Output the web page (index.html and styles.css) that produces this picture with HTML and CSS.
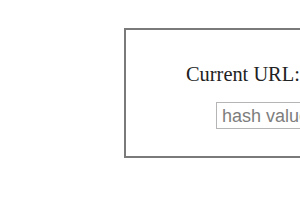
FILE: index.html
```html
<!DOCTYPE html>
<html>
<head>
<meta charset="utf-8">
<link rel="stylesheet" href="styles.css">
</head>
<body>
<div class="frame">
  <div class="label">Current URL:</div>
  <input class="hash" type="text" placeholder="hash value">
</div>
</body>
</html>
```
FILE: styles.css
```css
html, body {
  margin: 0;
  padding: 0;
  background: #ffffff;
  overflow: hidden;
}
body {
  width: 300px;
  height: 210px;
}
.frame {
  box-sizing: border-box;
  margin: 28px 0 0 124px;
  width: 260px;
  height: 130px;
  border: 2px solid #7a7a7a;
  padding: 33px 0 0 60px;
}
.label {
  font-family: "Liberation Serif", serif;
  font-size: 20.4px;
  color: #222;
  line-height: 22px;
}
.hash {
  display: block;
  box-sizing: border-box;
  margin: 17px 0 0 30px;
  width: 130px;
  height: 27px;
  border: 1px solid #b5b5b5;
  padding: 2px 5px 0;
  font-family: "Liberation Sans", sans-serif;
  font-size: 18px;
  color: #333;
}
.hash::placeholder {
  color: #7d7d7d;
}
```
